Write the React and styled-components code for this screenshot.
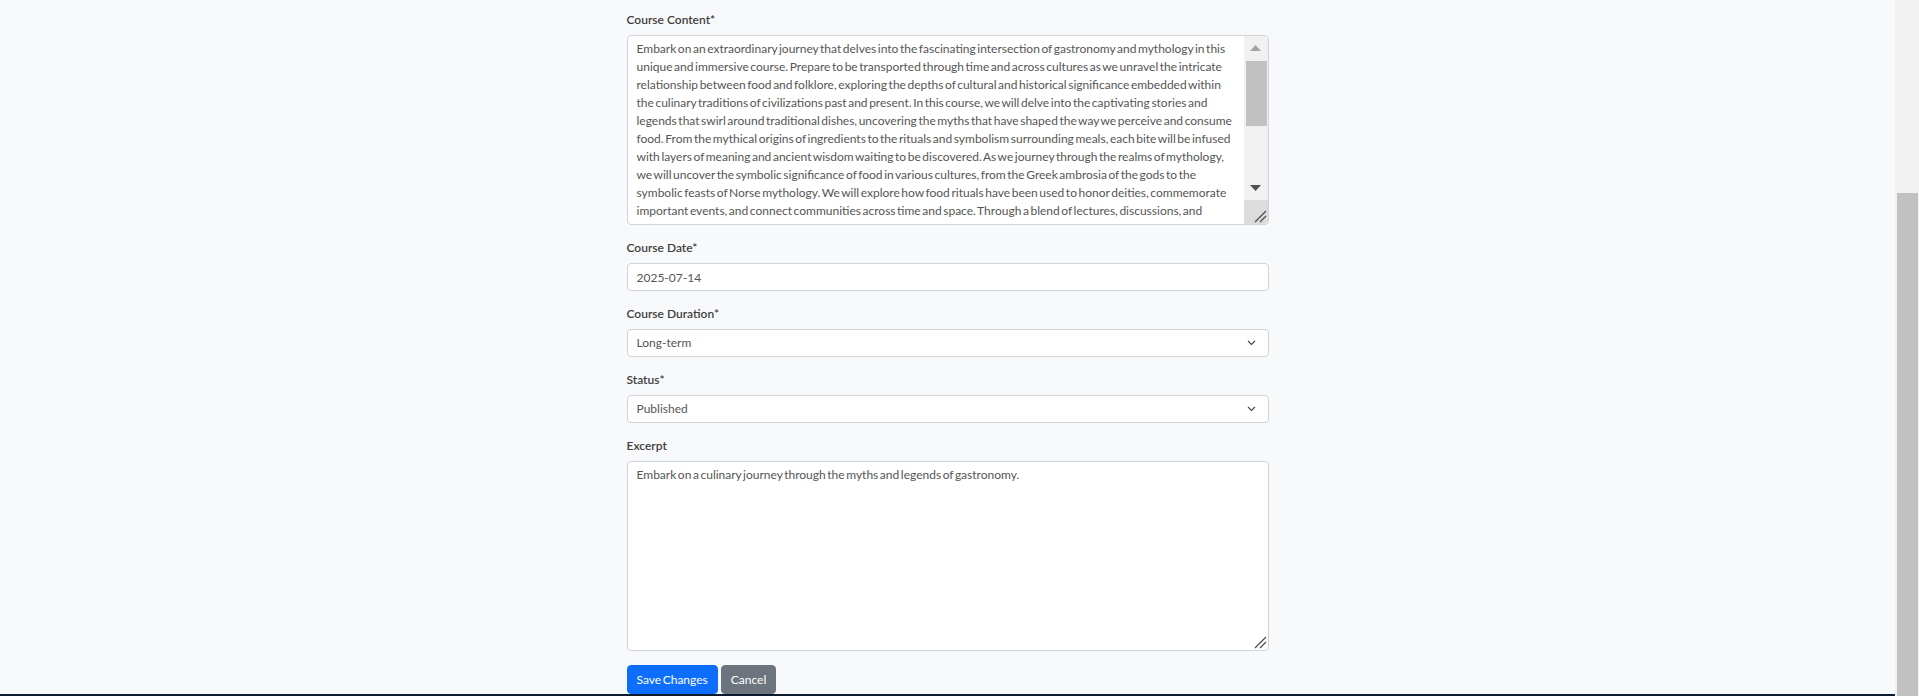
import React from "react";
import styled, { createGlobalStyle } from "styled-components";

const GlobalStyle = createGlobalStyle`
  html, body {
    margin: 0;
    padding: 0;
    height: 100%;
    overflow: hidden;
  }
  body {
    font-family: Lato, "Liberation Sans", sans-serif;
    background: #f8f9fa;
  }
  * { box-sizing: border-box; }
`;

const Shell = styled.div`
  display: flex;
  width: 100%;
  height: 696px;
  overflow: hidden;
`;

const Main = styled.main`
  flex: 1;
  min-width: 0;
  display: flex;
  flex-direction: column;
  overflow: hidden;
  background: #f8f9fa;
`;

const Form = styled.form`
  flex-shrink: 0;
  width: 642px;
  margin: 0 auto;
  padding-top: 11px;
`;

const Group = styled.div`
  margin-bottom: 14px;
`;

const Label = styled.label`
  display: block;
  font-size: 12px;
  line-height: 18px;
  font-weight: 600;
  color: #404040;
  margin-bottom: 6px;
`;

const fieldText = `
  font-family: Lato, "Liberation Sans", sans-serif;
  font-size: 12px;
  line-height: 18px;
  word-spacing: -1.5px;
  color: #555;
`;

const Input = styled.input`
  display: block;
  width: 100%;
  height: 28px;
  padding: 4px 9px;
  border: 1px solid #ced4da;
  border-radius: 4px;
  background: #fff;
  outline: none;
  ${fieldText}
`;

const SelectWrap = styled.div`
  position: relative;
`;

const Select = styled.select`
  display: block;
  width: 100%;
  height: 28px;
  padding: 4px 28px 4px 9px;
  border: 1px solid #ced4da;
  border-radius: 4px;
  background: #fff;
  outline: none;
  appearance: none;
  -webkit-appearance: none;
  ${fieldText}
`;

const Chevron = styled.svg`
  position: absolute;
  right: 13px;
  top: 50%;
  margin-top: -3px;
  width: 9px;
  height: 6px;
  pointer-events: none;
`;

const ScrollBox = styled.div`
  display: flex;
  height: 190px;
  border: 1px solid #ced4da;
  border-radius: 4px;
  background: #fff;
  overflow: hidden;
`;

const BareArea = styled.textarea`
  flex: 1;
  min-width: 0;
  border: 0;
  outline: none;
  resize: none;
  overflow: hidden;
  padding: 4px 9px;
  background: transparent;
  ${fieldText}
`;

const VScroll = styled.div`
  width: 24px;
  flex-shrink: 0;
  display: flex;
  flex-direction: column;
  background: #f1f1f1;
`;

const ArrowButton = styled.div`
  height: 24px;
  flex-shrink: 0;
  display: flex;
  align-items: center;
  justify-content: center;
`;

const Thumb = styled.div`
  height: 65px;
  margin: 1px 1px 0 2px;
  background: #c1c1c1;
  flex-shrink: 0;
`;

const Spacer = styled.div`
  flex: 1;
`;

const Corner = styled.div`
  height: 24px;
  flex-shrink: 0;
  background: #dcdcdc;
  display: flex;
  align-items: flex-end;
  justify-content: flex-end;
  padding: 0 1px 1px 0;
`;

const PlainAreaWrap = styled.div`
  position: relative;
`;

const PlainArea = styled.textarea`
  display: block;
  width: 100%;
  height: 190px;
  padding: 4px 9px;
  border: 1px solid #ced4da;
  border-radius: 4px;
  background: #fff;
  outline: none;
  resize: none;
  overflow: hidden;
  ${fieldText}
`;

const GripOverlay = styled.svg`
  position: absolute;
  right: 2px;
  bottom: 2px;
  width: 13px;
  height: 13px;
  pointer-events: none;
`;

const Actions = styled.div`
  display: flex;
  gap: 3px;
`;

const Button = styled.button`
  height: 29px;
  padding: 0 9px;
  border: 1px solid ${(p) => p.$bg};
  border-radius: 4px;
  background: ${(p) => p.$bg};
  color: #fff;
  font-family: Lato, "Liberation Sans", sans-serif;
  font-size: 12px;
  line-height: 18px;
  word-spacing: -1.5px;
  cursor: pointer;
`;

const Footer = styled.footer`
  flex-shrink: 0;
  height: 160px;
  background: #0d1b2e;
`;

const PageScroll = styled.div`
  width: 24px;
  flex-shrink: 0;
  display: flex;
  flex-direction: column;
  background: #f1f1f1;
`;

const PageThumb = styled.div`
  flex: 1;
  margin: 193px 1px 0 2px;
  background: #c1c1c1;
`;

const GripLines = () => (
  <path d="M1 12 L12 1 M6 12 L12 6" stroke="#4a4a4a" strokeWidth="1.2" fill="none" />
);

const content =
  "Embark on an extraordinary journey that delves into the fascinating intersection of gastronomy and mythology in this unique and immersive course. Prepare to be transported through time and across cultures as we unravel the intricate relationship between food and folklore, exploring the depths of cultural and historical significance embedded within the culinary traditions of civilizations past and present. In this course, we will delve into the captivating stories and legends that swirl around traditional dishes, uncovering the myths that have shaped the way we perceive and consume food. From the mythical origins of ingredients to the rituals and symbolism surrounding meals, each bite will be infused with layers of meaning and ancient wisdom waiting to be discovered. As we journey through the realms of mythology, we will uncover the symbolic significance of food in various cultures, from the Greek ambrosia of the gods to the symbolic feasts of Norse mythology. We will explore how food rituals have been used to honor deities, commemorate important events, and connect communities across time and space. Through a blend of lectures, discussions, and hands-on culinary experiences, you will gain a deeper understanding of the profound bond between what we eat and the stories we tell.";

const ChevronIcon = () => (
  <Chevron viewBox="0 0 9 6">
    <path d="M1 1 L4.5 4.5 L8 1" stroke="#444" strokeWidth="1.1" fill="none" />
  </Chevron>
);

export default function App() {
  return (
    <>
      <GlobalStyle />
      <Shell>
        <Main>
          <Form onSubmit={(e) => e.preventDefault()}>
            <Group>
              <Label>Course Content*</Label>
              <ScrollBox>
                <BareArea defaultValue={content} rows={10} />
                <VScroll>
                  <ArrowButton>
                    <svg width="11" height="6" viewBox="0 0 11 6">
                      <path d="M0 6 L5.5 0 L11 6 Z" fill="#a3a3a3" />
                    </svg>
                  </ArrowButton>
                  <Thumb />
                  <Spacer />
                  <ArrowButton>
                    <svg width="11" height="6" viewBox="0 0 11 6">
                      <path d="M0 0 L5.5 6 L11 0 Z" fill="#505050" />
                    </svg>
                  </ArrowButton>
                  <Corner>
                    <svg width="13" height="13" viewBox="0 0 13 13">
                      <GripLines />
                    </svg>
                  </Corner>
                </VScroll>
              </ScrollBox>
            </Group>
            <Group>
              <Label>Course Date*</Label>
              <Input type="text" defaultValue="2025-07-14" />
            </Group>
            <Group>
              <Label>Course Duration*</Label>
              <SelectWrap>
                <Select defaultValue="long">
                  <option value="short">Short-term</option>
                  <option value="long">Long-term</option>
                </Select>
                <ChevronIcon />
              </SelectWrap>
            </Group>
            <Group>
              <Label>Status*</Label>
              <SelectWrap>
                <Select defaultValue="published">
                  <option value="draft">Draft</option>
                  <option value="published">Published</option>
                </Select>
                <ChevronIcon />
              </SelectWrap>
            </Group>
            <Group>
              <Label>Excerpt</Label>
              <PlainAreaWrap>
                <PlainArea
                  rows={10}
                  defaultValue="Embark on a culinary journey through the myths and legends of gastronomy."
                />
                <GripOverlay viewBox="0 0 13 13">
                  <GripLines />
                </GripOverlay>
              </PlainAreaWrap>
            </Group>
            <Actions>
              <Button type="submit" $bg="#0d6efd">Save Changes</Button>
              <Button type="button" $bg="#6c757d">Cancel</Button>
            </Actions>
          </Form>
          <Footer />
        </Main>
        <PageScroll>
          <PageThumb />
        </PageScroll>
      </Shell>
    </>
  );
}
